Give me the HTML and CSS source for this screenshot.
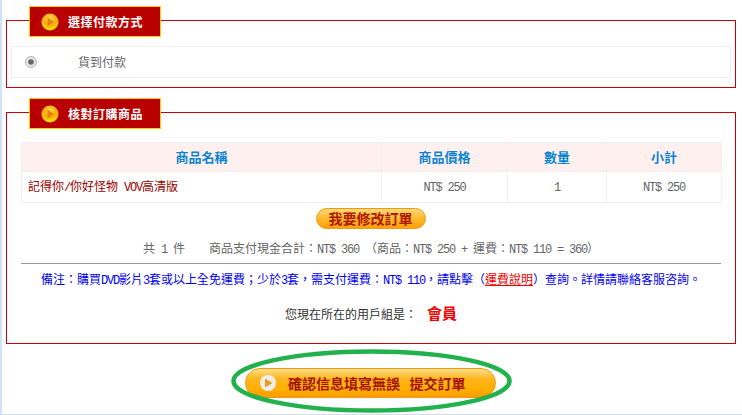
FILE: index.html
```html
<!DOCTYPE html>
<html lang="zh-Hant">
<head>
<meta charset="utf-8">
<title>確認訂單</title>
<link rel="stylesheet" href="styles.css">
</head>
<body>
<section class="panel panel-pay">
  <h2 class="legend">
    <svg class="legend-icon" viewBox="0 0 18 18"><defs><radialGradient id="lg1" cx="50%" cy="30%" r="70%"><stop offset="0" stop-color="#ffd84a"/><stop offset=".55" stop-color="#f9a90e"/><stop offset="1" stop-color="#ffe400"/></radialGradient></defs><circle cx="9" cy="9" r="8.5" fill="url(#lg1)"/><path d="M6.5 4.5 13 9l-6.500 4.500z" fill="#e8820a"/></svg>
    <span>選擇付款方式</span>
  </h2>
  <label class="pay-row">
    <svg class="radio" viewBox="0 0 12 12"><circle cx="6" cy="6" r="5.500" fill="#e6e6e6" stroke="#b5b5b5"/><circle cx="6" cy="6" r="2.800" fill="#666"/></svg>
    <span>貨到付款</span>
  </label>
</section>

<section class="panel panel-goods">
  <h2 class="legend">
    <svg class="legend-icon" viewBox="0 0 18 18"><defs><radialGradient id="lg2" cx="50%" cy="30%" r="70%"><stop offset="0" stop-color="#ffd84a"/><stop offset=".55" stop-color="#f9a90e"/><stop offset="1" stop-color="#ffe400"/></radialGradient></defs><circle cx="9" cy="9" r="8.500" fill="url(#lg2)"/><path d="M6.500 4.500 13 9l-6.500 4.500z" fill="#e8820a"/></svg>
    <span>核對訂購商品</span>
  </h2>
  <table class="goods">
    <colgroup><col class="c1"><col class="c2"><col class="c3"><col class="c4"></colgroup>
    <thead>
      <tr><th>商品名稱</th><th>商品價格</th><th>數量</th><th>小計</th></tr>
    </thead>
    <tbody>
      <tr>
        <td class="name">記得你<span class="n">/</span>你好怪物<span class="n"> VOV</span>高清版</td>
        <td class="num"><span class="n">NT$ 250</span></td>
        <td class="num"><span class="n">1</span></td>
        <td class="num"><span class="n">NT$ 250</span></td>
      </tr>
    </tbody>
  </table>
  <div class="edit-wrap"><a class="edit-btn">我要修改訂單</a></div>
  <p class="total">共<span class="n"> 1 </span>件<span class="n">    </span>商品支付現金合計：<span class="n">NT$ 360 </span>（商品：<span class="n">NT$ 250 + </span>運費：<span class="n">NT$ 110 = 360</span>）</p>
  <p class="note">備注：購買<span class="n">DVD</span>影片<span class="n">3</span>套或以上全免運費；少於<span class="n">3</span>套，需支付運費：<span class="n">NT$ 110</span>，請點擊（<a class="ship">運費說明</a>）查詢。詳情請聯絡客服咨詢。</p>
  <p class="group">您現在所在的用戶組是：<strong>會員</strong></p>
</section>

<div class="submit-wrap">
  <div class="submit-box">
    <a class="submit-btn">
      <svg class="submit-icon" viewBox="0 0 16 16"><circle cx="8" cy="8" r="8" fill="#eee"/><path d="M5 3.500 12.500 8 5 12.500z" fill="#ee9a12"/></svg>
      <span>確認信息填寫無誤&nbsp;&nbsp;&nbsp;提交訂單</span>
    </a>
    <svg class="ring" viewBox="0 0 281 64"><ellipse cx="140.500" cy="32" rx="138" ry="29.500" fill="none" stroke="#22b14c" stroke-width="4.500"/></svg>
  </div>
</div>
</body>
</html>
```
FILE: styles.css
```css
* { box-sizing: border-box; }
html, body { margin: 0; height: 100%; }
body {
  height: 415px;
  overflow: hidden;
  background: #fff;
  border-left: 2px solid #cfe2f6;
  border-bottom: 1px solid #d3dde6;
  padding: 20px 6px 0 4px;
  font: 12px/16px "Noto Sans CJK TC", sans-serif;
  color: #666;
}
.n {
  font: 12px/16px "Liberation Mono", monospace;
  letter-spacing: -1.2px;
  white-space: pre;
}
.panel {
  width: 730px;
  border: 1px solid #c4000a;
  background: #fff;
}
.panel-pay { height: 68px; margin-bottom: 24px; }
.panel-goods { height: 232px; }
.legend {
  display: flex;
  align-items: center;
  width: 132px;
  height: 31px;
  margin: -15px 0 0 22px;
  padding-left: 11px;
  background: #b80000;
  border: 1px solid #ffcc00;
  color: #fff;
  font-size: 12px;
  font-weight: bold;
  letter-spacing: .5px;
}
.legend-icon { width: 18px; height: 18px; margin-right: 9px; flex: none; }
.pay-row {
  display: flex;
  align-items: center;
  width: 720px;
  height: 32px;
  margin: 9px 0 0 4px;
  padding-left: 13px;
  border: 1px solid #eee;
}
.radio { width: 12px; height: 12px; flex: none; margin-right: 41px; }
.goods {
  width: 700px;
  margin: 13px 0 0 14px;
  border-collapse: collapse;
  table-layout: fixed;
}
.c1 { width: 360px; }
.c2 { width: 126px; }
.c3 { width: 99px; }
.c4 { width: 115px; }
.goods th, .goods td { border: 1px solid #f0f0f0; padding: 0; text-align: center; }
.goods th {
  height: 29px;
  background: #fff0f0;
  color: #0b85d2;
  font-size: 13px;
  font-weight: bold;
}
.goods td { height: 31px; }
.goods .name { text-align: left; padding-left: 6px; color: #990000; }
.edit-wrap { display: flex; justify-content: center; margin: 5px 0 0 -1px; }
.edit-btn {
  width: 110px;
  height: 21px;
  border: 1px solid #ee9a12;
  border-radius: 11px;
  background: linear-gradient(#ffd978, #ffb627 55%, #ff9f0a);
  color: #ac1a00;
  font-size: 14px;
  font-weight: bold;
  line-height: 18px;
  text-align: center;
}
.total { margin: 11px 0 0; text-align: center; }
.note {
  width: 700px;
  margin: 5px 0 0 14px;
  padding-top: 7px;
  border-top: 1px solid #999;
  color: #0000f0;
  text-align: center;
}
.ship { color: #f00000; text-decoration: underline; }
.group {
  margin: 16px 0 0;
  color: #333;
  text-align: center;
}
.group strong { color: #f00000; font-size: 15px; margin-left: 10px; }
.submit-wrap { display: flex; justify-content: center; margin-top: 24px; }
.submit-box {
  position: relative;
  display: flex;
  width: 251px;
  height: 30px;
  margin-left: -1px;
}
.submit-btn {
  display: flex;
  align-items: center;
  width: 100%;
  padding-left: 14px;
  border: 1px solid #ee9a12;
  border-radius: 15px;
  background: linear-gradient(#ffe08a, #ffb41e 35%, #ffb000 70%, #f99c05);
  color: #a51300;
  font-size: 14px;
  font-weight: bold;
}
.submit-icon { width: 16px; height: 16px; flex: none; margin-right: 12px; }
.ring {
  position: absolute;
  left: -14px;
  top: -19px;
  width: 281px;
  height: 64px;
}
```
